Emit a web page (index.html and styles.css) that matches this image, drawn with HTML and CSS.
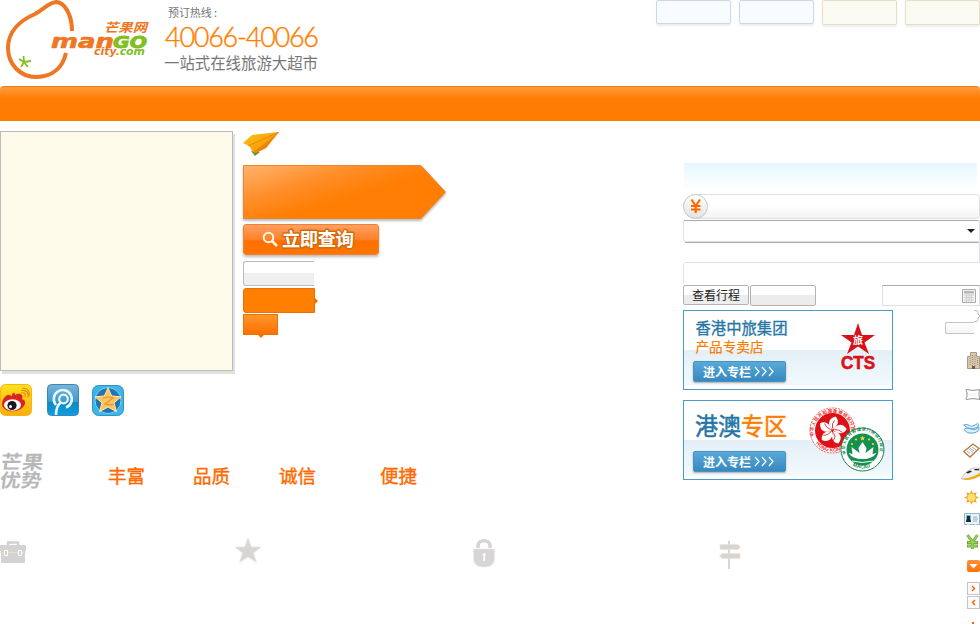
FILE: index.html
```html
<!DOCTYPE html>
<html lang="zh-CN">
<head>
<meta charset="utf-8">
<title>芒果网</title>
<link rel="stylesheet" href="styles.css">
</head>
<body>
<div class="page">
  <header class="header">
    <svg class="logo" width="160" height="86" viewBox="0 0 160 86">
      <g fill="none" stroke="#ef7622" stroke-width="4">
        <path d="M72 31C72 14 64 2 56 2C48 3 44 9 35 14C21 20 8 31 8 48C8 64 20 77 36 77C54 77 63 66 66 53"/>
      </g>
      <path d="M24 62L23.500 56M24 62l7-1M24 62l4 5M24 62l-3 5M24 62l-5-3" fill="none" stroke="#7fc31c" stroke-width="1.800"/>
      <text class="logo-cn" x="104" y="32" font-size="12.500" textLength="43" lengthAdjust="spacingAndGlyphs">芒果网</text>
      <text class="logo-en orange" x="51" y="48" font-size="20" stroke-width=".6" textLength="63" lengthAdjust="spacingAndGlyphs">man</text>
      <text class="logo-en green" x="113" y="48" font-size="15.500" stroke-width=".8" textLength="34" lengthAdjust="spacingAndGlyphs">GO</text>
      <text class="logo-en small" x="94" y="55" font-size="10" textLength="51" lengthAdjust="spacingAndGlyphs"><tspan class="orange">city</tspan><tspan class="green">.com</tspan></text>
    </svg>
    <svg class="hotline" width="170" height="86" viewBox="0 0 170 86">
      <text class="cn" x="8" y="17" font-size="11" fill="#777" textLength="49">预订热线 :</text>
      <text class="digits" x="5" y="47" font-size="27" textLength="154">40066-40066</text>
      <text class="cn" x="4" y="68.500" font-size="16" fill="#777" textLength="154" lengthAdjust="spacingAndGlyphs">一站式在线旅游大超市</text>
    </svg>
    <div class="tabs">
      <span class="tab blue"></span><span class="tab blue"></span><span class="tab cream"></span><span class="tab cream"></span>
    </div>
  </header>
  <nav class="nav"></nav>
  <main class="main">
    <section class="left">
      <div class="top">
        <div class="panel"></div>
        <div class="stack">
          <svg class="plane" width="38" height="26" viewBox="0 0 38 26">
            <defs><linearGradient id="pl" x1="0" y1="0" x2="1" y2="1"><stop offset="0" stop-color="#ffc51c"/><stop offset=".55" stop-color="#f9a30c"/><stop offset="1" stop-color="#e46b00"/></linearGradient></defs>
            <path d="M8 20l4 5 5-4z" fill="#5f9a2c"/>
            <path d="M0 12L9 4 36 1 23 17 13 22 10 21 6 15z" fill="url(#pl)"/>
            <path d="M36 1L5 15" stroke="#d98200" stroke-width=".7" fill="none"/>
            <path d="M36 1L11 21 13 22 23 17z" fill="#e97500" opacity=".6"/>
          </svg>
          <svg class="arrow" width="206" height="59" viewBox="0 0 206 59">
            <defs><linearGradient id="ar" gradientUnits="userSpaceOnUse" x1="25" y1="-12" x2="45" y2="52"><stop offset="0" stop-color="#ffb878"/><stop offset=".6" stop-color="#ff8d28"/><stop offset="1" stop-color="#ff7d02"/></linearGradient></defs>
            <path d="M.5.5H178L202.500 27 178 53.500H.5z" fill="url(#ar)" stroke="#f08428"/>
          </svg>
          <button class="search">
            <svg width="17" height="17" viewBox="0 0 17 17" fill="none" stroke="#fff7e6" stroke-width="2"><circle cx="6.500" cy="6.500" r="4.800"/><path d="M10 10l5 5" stroke-width="2.600"/></svg>
            <svg width="76" height="26" viewBox="0 0 76 26"><text class="search-text" x="1" y="19" font-size="18.500" textLength="72">立即查询</text></svg>
          </button>
          <div class="tab-off"></div>
          <div class="tab-on"></div>
          <div class="tab-small"></div>
        </div>
      </div>
      <div class="social">
        <svg width="32" height="32" viewBox="0 0 32 32">
          <defs><linearGradient id="wb" x2="0" y2="1"><stop stop-color="#ffe11c"/><stop offset="1" stop-color="#f8ae0a"/></linearGradient></defs>
          <rect x=".5" y=".5" width="31" height="31" rx="5" fill="url(#wb)" stroke="#f4b51b"/>
          <path d="M2 20C2 15 7 10 9 11L12 12C12 8 15 8 15 11C20 8 24 11 22 15C27 17 25 21 23 23C17 30 2 28 2 20z" fill="#dd2222"/>
          <ellipse cx="12.500" cy="21" rx="8.500" ry="5.800" fill="#fff"/><circle cx="12" cy="21.500" r="4.600" fill="#191919"/><circle cx="10.500" cy="22.500" r="1.500" fill="#fff"/>
          <path d="M21 9c4-1 5 1 4 4M21 6.500c6-1 8 3 7 7M22 4c6 0 8 4 7 8" fill="none" stroke="#e58a19" stroke-width="1.200"/>
        </svg>
        <svg width="32" height="32" viewBox="0 0 32 32">
          <defs><linearGradient id="tx" x2="0" y2="1"><stop stop-color="#7bb5d8"/><stop offset=".55" stop-color="#3c9bcf"/><stop offset=".56" stop-color="#0788c6"/><stop offset="1" stop-color="#10a0dd"/></linearGradient></defs>
          <rect x=".5" y=".5" width="31" height="31" rx="4" fill="url(#tx)" stroke="#3b85b8"/>
          <path d="M9 21A9 9 0 1 1 19 23.500M9 31C9 25 10.500 21 14 18" fill="none" stroke="#e7f6fc" stroke-width="2.600"/>
          <circle cx="16.500" cy="15" r="4.300" fill="none" stroke="#e7f6fc" stroke-width="2.200"/>
        </svg>
        <svg width="32" height="32" viewBox="0 0 32 32">
          <rect x=".5" y="1.500" width="31" height="30" rx="6" fill="#3db4ea" stroke="#2d94cf"/>
          <circle cx="16" cy="16.500" r="13" fill="#2375ad" stroke="#83d3f5"/>
          <path d="M16 4l3.700 8 9.300.8-7 6 2.500 8.900-8.500-4.700-8.500 4.700 2.500-8.900-7-6 9.300-.8z" fill="#ffc45c" stroke="#ffe8b4"/>
          <path d="M11 14c4-1 8-1 10 0l-8 6c3 1 7 1 9 0" fill="none" stroke="#e39a42" stroke-width="1.400"/>
        </svg>
      </div>
      <div class="advantages">
        <svg class="adv-title" width="46" height="40" viewBox="0 0 46 40"><g transform="skewX(-8)"><text class="cnb" x="2" y="16.500" font-size="19" textLength="43" lengthAdjust="spacingAndGlyphs">芒果</text><text class="cnb" x="4" y="35.500" font-size="18.500" textLength="42" lengthAdjust="spacingAndGlyphs">优势</text></g></svg>
        <span class="adv a1">丰富</span><span class="adv a2">品质</span><span class="adv a3">诚信</span><span class="adv a4">便捷</span>
      </div>
      <div class="features">
        <svg width="26" height="30" viewBox="0 0 26 30">
          <path d="M8 7V4.500h10V7" fill="none" stroke="#d3d0ce" stroke-width="2.400"/><path d="M0 7h26v6h-1v12H1V13H0z" fill="#d3d3d3"/>
          <path d="M0 14.500h26" stroke="#f6d9c6"/>
          <path d="M4.500 12.500h3v5h-3zM18.500 12.500h3v5h-3z" fill="#d3d3d3" stroke="#fff"/>
        </svg>
        <svg class="f2" width="26" height="30" viewBox="0 0 26 30"><path d="M13 0l3.300 9H26l-7.500 6 3 9.500L13 19 4.500 24.500l3-9.500L0 9h9.700z" fill="#d6d6d6" stroke="#f6dfcf" stroke-width=".7"/></svg>
        <svg class="f3" width="22" height="30" viewBox="0 0 22 30"><path d="M5 10V7.500C5 1 17 1 17 7.500V10" fill="none" stroke="#d6d4d2" stroke-width="3.500"/><path d="M.5 11h21v10Q21 29 11 29T.5 21z" fill="#d6d6d6" stroke="#f6e3d7" stroke-width=".6"/><path d="M11 15a1.600 1.600 0 0 1 1 3l.2 5h-2l.2-5a1.600 1.600 0 0 1 .6-3z" fill="#fff"/></svg>
        <svg class="f4" width="22" height="31" viewBox="0 0 22 31" fill="#d6d6d6"><path d="M9 3h2v28H9z"/><path d="M1 6.500h18l2.500 2.500-2.500 2.500H1zM3 15.500h18v5H3L.5 18z" stroke="#f5dfd1" stroke-width=".6"/></svg>
      </div>
    </section>
    <section class="right">
      <div class="sky"></div>
      <div class="fee"><svg width="25" height="25" viewBox="0 0 25 25"><defs><linearGradient id="cy" x2="0" y2="1"><stop stop-color="#fff"/><stop offset="1" stop-color="#e3e3e3"/></linearGradient></defs><circle cx="12.500" cy="12.500" r="12" fill="url(#cy)" stroke="#c8c8c8"/><path d="M8.500 5.500l4.200 6.500L17 5.500M12.700 12v7M8 12h9.500M8 15.500h9.500" fill="none" stroke="#ff6a00" stroke-width="2.200"/></svg></div>
      <div class="select"><i class="caret"></i></div>
      <div class="field-end"></div>
      <div class="field-start"></div>
      <div class="controls">
        <span class="btn">查看行程</span><span class="btn blank"></span>
        <span class="date"><svg width="14" height="14" viewBox="0 0 14 14"><path d="M.5.5h13v13H.5z" fill="#f4f4f4" stroke="#aaa"/><path d="M2 2h10v2.500H2z" fill="#b6b6b6"/><path d="M2 6h10M2 8.500h10M2 11h10M4.500 5v8M7 5v8M9.500 5v8" stroke="#c6c6c6" stroke-width=".8"/></svg></span>
      </div>
      <div class="lower">
        <div class="ads">
          <article class="ad">
            <div class="copy">
              <svg width="110" height="44" viewBox="0 0 110 44"><text class="cn" x="1.500" y="16.500" font-size="16" fill="#2575a5" stroke="#2575a5" stroke-width=".3" textLength="92" lengthAdjust="spacingAndGlyphs">香港中旅集团</text><text class="cn" x="1.500" y="34.500" font-size="14" fill="#ff7c00" stroke="#ff7c00" stroke-width=".2" textLength="68" lengthAdjust="spacingAndGlyphs">产品专卖店</text></svg>
              <span class="enter">进入专栏<svg width="21" height="12" viewBox="0 0 21 12" fill="none" stroke="#fff" stroke-width="1.200"><path d="M1 1l4 4.500L1 10M8 1l4 4.500L8 10M15 1l4 4.500L15 10"/></svg></span>
            </div>
            <svg class="cts" width="36" height="48" viewBox="0 0 36 48"><path d="M18 0l4 12h13l-10.500 7.500L29 31l-11-7.500L7 31l4.500-11.500L1 12h13z" fill="#db111a"/><text x="13" y="20.500" class="cnb" font-size="10" fill="#fff">旅</text><text class="cts-text" x="1" y="46" font-size="17.500" textLength="34" lengthAdjust="spacingAndGlyphs">CTS</text></svg>
          </article>
          <article class="ad">
            <div class="copy">
              <svg width="110" height="44" viewBox="0 0 110 44"><text class="cn" x="1" y="28" font-size="24" stroke-width=".5" textLength="92" lengthAdjust="spacingAndGlyphs"><tspan fill="#2575a5" stroke="#2575a5">港澳</tspan><tspan fill="#ff7c00" stroke="#ff7c00">专区</tspan></text></svg>
              <span class="enter">进入专栏<svg width="21" height="12" viewBox="0 0 21 12" fill="none" stroke="#fff" stroke-width="1.200"><path d="M1 1l4 4.500L1 10M8 1l4 4.500L8 10M15 1l4 4.500L15 10"/></svg></span>
            </div>
            <svg class="emblems" width="76" height="66" viewBox="0 0 76 66">
              <defs><path id="rim1" d="M5 29A19 19 0 1 1 42 29"/><path id="rim2" d="M37 47A17.500 17.500 0 1 1 70 47"/><path id="rim3" d="M34 42A19.500 19.500 0 0 0 73 42"/><path id="rim4" d="M3 27A21 21 0 0 0 40 37"/></defs>
              <circle cx="23.500" cy="23.500" r="22.500" fill="#fff" stroke="#e33" stroke-width=".8" stroke-dasharray="2 1"/><circle cx="23.500" cy="23.500" r="17.500" fill="#dd0f17"/>
              <text class="cnb rim-red" font-size="4.500"><textPath href="#rim1" textLength="68">中华人民共和国香港特别行政区</textPath></text>
              <text class="rim-en rim-red" font-size="5"><textPath href="#rim4" startOffset="10">HONG KONG</textPath></text>
              <g fill="#fff" transform="translate(23.500 23.500)"><path d="M0-1C-5-5-5-12 3-14C7-10 6-5 0-1z"/><path d="M0-1C-5-5-5-12 3-14C7-10 6-5 0-1z" transform="rotate(72)"/><path d="M0-1C-5-5-5-12 3-14C7-10 6-5 0-1z" transform="rotate(144)"/><path d="M0-1C-5-5-5-12 3-14C7-10 6-5 0-1z" transform="rotate(216)"/><path d="M0-1C-5-5-5-12 3-14C7-10 6-5 0-1z" transform="rotate(288)"/></g>
              <g fill="none" stroke="#dd0f17" stroke-width=".8" transform="translate(23.500 23.500)"><path d="M0-2Q-1-7 2-10M2-1Q7-1 10 2M1 2Q4 6 1 10M-1 1Q-5 5-9 5M-2-1Q-7-3-8-7"/></g>
              <circle cx="53.500" cy="42.500" r="21.500" fill="#fff" stroke="#15854a"/><circle cx="53.500" cy="42.500" r="16" fill="#149052"/>
              <text class="cnb rim-green" font-size="4"><textPath href="#rim2" textLength="64">中华人民共和国澳门特别行政区</textPath></text>
              <text class="rim-en rim-green" font-size="5"><textPath href="#rim3" startOffset="20">MACAU</textPath></text>
              <path d="M53.500 35l4 6-1 5 8-6-1 7 4-1q-4 6-14 6t-14-6l4 1-1-7 8 6-1-5z" fill="#fff"/><path d="M43 54q10 3 21 0" stroke="#fff" fill="none"/>
              <path d="M53.500 28.500l.8 2h2l-1.600 1.300.6 2-1.800-1.200-1.800 1.200.6-2-1.600-1.300h2z" fill="#f5dc27"/><g fill="#f5dc27"><circle cx="47" cy="32.500" r="1.100"/><circle cx="60" cy="32.500" r="1.100"/><circle cx="43" cy="37" r="1.100"/><circle cx="64" cy="37" r="1.100"/></g>
            </svg>
          </article>
        </div>
        <div class="edge">
          <svg width="6" height="12" viewBox="0 0 6 12"><path d="M0 .5h2q2 0 2 2v1.500l2 2-2 2v1.500q0 2-2 2H0" fill="#fff" stroke="#bbb"/></svg>
          <div class="stub"></div>
          <svg class="e-building" width="13" height="17" viewBox="0 0 13 17"><path d="M3.500.5h6v4h3v12H.5v-12h3z" fill="#d8c9b0" stroke="#aa9984"/><path d="M3 6v8M5.500 3v11M8 3v11M10.500 6v8" stroke="#98866f" stroke-dasharray="1 1"/><path d="M5 14h3v3H5z" fill="#735c43"/></svg>
          <svg class="e-pillow" width="15" height="13" viewBox="0 0 15 13"><path d="M1 1.500q7 2 14 0M1 11.500q7-2 14 0M1 1.500Q.5 3 2 4v5Q.5 10 1 11.500M14.500 2q-1 4 0 9" fill="#eee" stroke="#999"/><path d="M3 5v3l9 .500V5z" fill="#f6f6f6"/></svg>
          <svg class="e-ribbon" width="17" height="12" viewBox="0 0 17 12" fill="#d8effc" stroke="#5ba5d2"><path d="M.7 3q3-1.500 5.500.5t8.500-2q2 1 0 3.500l-5 2Q4 7 .7 3zM1 7.500Q3 5 8 7q5 2 8-2 1 5-6 6Q4 12 1 7.500z"/></svg>
          <svg class="e-ticket" width="17" height="15" viewBox="0 0 17 15"><path d="M.8 8.500L10 1l6 4.500-9 8.500z" fill="#fff" stroke="#b5793c" stroke-width="1.300"/><path d="M4 8l3 2.500M6 6.500l4 3M9 4l4 3M7 5l4 3" stroke="#aaa"/></svg>
          <svg class="e-train" width="19" height="14" viewBox="0 0 19 14"><path d="M0 12Q5 3 12 1h7v7Q10 13 0 12z" fill="#eee" stroke="#aaa" stroke-width=".6"/><path d="M1 12Q11 11 19 6v3Q8 15 1 12z" fill="#edab16"/><path d="M5 5.500l4-2 2 1-4 2zM13 2h5v1.200h-4z" fill="#222"/></svg>
          <svg class="e-sun" width="15" height="15" viewBox="0 0 15 15"><path d="M7.500 0L9 3.500 12.800 2.200 11.500 6 15 7.500 11.500 9 12.800 12.800 9 11.500 7.500 15 6 11.500 2.200 12.800 3.500 9 0 7.500 3.500 6 2.200 2.200 6 3.500z" fill="#f2a52e"/><circle cx="7.500" cy="7.500" r="4.300" fill="#ffdf70" stroke="#f4b545"/></svg>
          <svg class="e-card" width="16" height="13" viewBox="0 0 16 13"><path d="M.5.5h15v11H.5z" fill="#e8f4f8" stroke="#93b6c4"/><path d="M2 2h5v7H2z" fill="#78b7dc"/><path d="M3 3h3v3l1 2v1H2V8l1-2z" fill="#172b3a"/><path d="M9 4h4M9 6h5M9 8h4" stroke="#9ab"/><path d="M3 12h3M10 12h3" stroke="#fff"/></svg>
          <svg class="e-yen" width="13" height="16" viewBox="0 0 13 16"><path d="M1.500 1l5 7 5-7M6.500 7v8M1 8.500h11M1 12h11" fill="none" stroke="#6aa52f" stroke-width="3"/><path d="M1.500 1l5 7 5-7M6.500 7v8M2 8.500h9M2 12h9" fill="none" stroke="#9bd064" stroke-width="1.500"/></svg>
          <div class="drop"><svg width="9" height="5" viewBox="0 0 9 5"><path d="M.5 0h8l-4 4.500z" fill="#fff"/></svg></div>
          <div class="pager p1"><svg width="5" height="5" viewBox="0 0 5 5"><path d="M1 0l2.500 2.500L1 5" fill="none" stroke="#ff6000" stroke-width="1.400"/></svg></div>
          <div class="pager"><svg width="5" height="5" viewBox="0 0 5 5"><path d="M4 0L1.500 2.500 4 5" fill="none" stroke="#ff6000" stroke-width="1.400"/></svg></div>
          <i class="dot"></i>
        </div>
      </div>
    </section>
  </main>
</div>
</body>
</html>
```
FILE: styles.css
```css
* { box-sizing: border-box; }
body { margin: 0; background: #fff; font-family: "Liberation Sans", "Noto Sans CJK SC", sans-serif; }
svg { display: block; flex: none; overflow: visible; }
.page { width: 980px; height: 625px; overflow: hidden; }

.header { display: flex; height: 86px; }
.cn { font-family: "Noto Sans CJK SC", sans-serif; }
.cnb { font-family: "Noto Sans CJK SC", sans-serif; font-weight: 700; }
.logo-cn { font-family: "Noto Sans CJK SC", sans-serif; font-weight: 700; font-style: italic; fill: #ef7622; }
.logo-en { font-family: "DejaVu Sans", sans-serif; font-weight: 700; font-style: italic; }
.orange { fill: #ef7622; stroke: #ef7622; }
.green { fill: #80bf20; stroke: #80bf20; }
.small tspan { stroke: none; }
.digits { font-family: Lato, sans-serif; font-weight: 300; fill: #ff8000; stroke: #ff8000; stroke-width: .4px; }
.tabs { display: flex; gap: 8px; margin-left: auto; }
.tab { width: 75px; height: 24px; border: 1px solid #cad9e7; border-radius: 2px; box-shadow: 0 2px 2px #eee; }
.blue { background: #f9fcff; }
.cream { height: 25px; border-color: #e6dfc4; background: #fbfaf2; }

.nav { height: 35px; border-top: 1px solid #f87a08; border-radius: 4px 4px 0 0; background: linear-gradient(#ff9a3d, #ff7c02 12px); }
.main { display: flex; padding-top: 10px; }
.left { flex: none; width: 683px; }
.top { display: flex; height: 253px; gap: 10px; }
.panel { width: 233px; height: 240px; border: 1px solid #bdbdb7; background: #fdfae9; box-shadow: 2px 3px 0 #e0e0de; }
.stack { display: flex; flex-direction: column; align-items: flex-start; }
.arrow { margin-top: 8px; filter: drop-shadow(0 2px 1px #bbb); }
.search { display: flex; align-items: center; gap: 2px; width: 136px; height: 31px; padding: 0 0 0 18px; border: 1px solid #f0822d; border-radius: 3px; background: linear-gradient(#ffa064, #ff8125 50%, #ff7000 55%, #ff7500); box-shadow: 0 2px 3px #bbb; }
.search-text { font-family: "Noto Sans CJK SC", sans-serif; font-weight: 700; fill: #fff; stroke: #d66a0b; stroke-width: 3px; paint-order: stroke; stroke-linejoin: round; }
.tab-off { width: 71px; height: 25px; margin-top: 6px; border: 1px solid #bbb; border-right: 0; border-radius: 3px 0 0 3px; background: linear-gradient(#fff 50%, #efefef 50%); }
.tab-on, .tab-small { position: relative; border: 1px solid #e97206; background: #ff7f02; }
.tab-on { width: 72px; height: 25px; margin-top: 2px; border-radius: 3px 0 0 3px; }
.tab-on::after { content: ""; position: absolute; right: -4px; top: 9px; border: 3px solid transparent; border-right: 0; border-left-color: #e97206; }
.tab-small { width: 35px; height: 21px; margin-top: 1px; background: linear-gradient(#ff962d, #ff7000); }
.tab-small::after { content: ""; position: absolute; left: 14px; bottom: -4px; border: 3px solid transparent; border-bottom: 0; border-top-color: #f57200; }

.social { display: flex; gap: 13px; height: 32px; }
.social svg:first-child { margin-right: 2px; }
.advantages { display: flex; align-items: flex-start; margin-top: 36px; height: 86px; }
.adv-title { fill: #b8b8b8; }
.adv { width: 38px; margin-top: 12px; font: 18.500px/22px "Noto Sans CJK SC", sans-serif; color: #ff6a00; -webkit-text-stroke: .4px #ff6a00; white-space: nowrap; }
.a1 { margin-left: 62px; }
.a2 { margin-left: 47px; }
.a3 { margin-left: 48px; }
.a4 { margin-left: 63px; }
.features { display: flex; width: 741px; }
.f2 { margin-left: 209px; }
.f3 { margin-left: 212px; }
.f4 { margin-left: 224px; }

.right { flex: none; width: 297px; padding-top: 32px; }
.sky { height: 26px; margin: 0 3px 5px 1px; background: linear-gradient(#e5f8ff, #fff); }
.fee { height: 25px; border: 1px solid #ddd; border-radius: 13px 4px 4px 13px; background: linear-gradient(#fff 45%, #f3f3f3); }
.fee svg { margin: -1px; }
.select { display: flex; align-items: center; justify-content: flex-end; height: 22px; margin-top: 1px; padding-right: 4px; border: 1px solid #dfdfe7; border-top-color: #aaaab2; border-radius: 2px; }
.caret { border: 4px solid transparent; border-bottom: 0; border-top-color: #222; }
.field-end { height: 21px; margin-left: 2px; border: 1px solid #dfdfe7; border-top-color: #aaaab2; border-left: 0; border-radius: 0 2px 2px 0; }
.field-start { height: 21px; border-left: 1px solid #dfdfe7; border-radius: 2px 0 0 2px; }
.controls { display: flex; gap: 1px; height: 25px; margin-top: 1px; }
.btn { width: 66px; height: 20px; border: 1px solid #b3b3b3; border-radius: 2px; background: linear-gradient(#fff 50%, #ececec 50%); font: 12px/18px "Noto Sans CJK SC", sans-serif; color: #222; text-align: center; }
.blank { height: 21px; }
.date { display: flex; align-items: center; justify-content: flex-end; width: 98px; height: 21px; margin-left: auto; padding-right: 3px; border: 1px solid #dfdfe7; border-top-color: #aaaab2; }

.lower { display: flex; justify-content: space-between; }
.ads { display: flex; flex-direction: column; gap: 10px; width: 210px; }
.ad { display: flex; height: 80px; border: 1px solid #4b9bcb; background: linear-gradient(#fff 50%, #e3eff7 50%, #f2f9fd 95%, #fff 97%); }
.copy { width: 126px; padding: 6px 0 0 10px; }
.enter { display: flex; align-items: center; gap: 3px; width: 93px; height: 21px; margin-left: -1px; padding-left: 9px; border: 1px solid #4393c4; border-radius: 2px; background: linear-gradient(#58aad9, #3788bf); box-shadow: 0 1px 2px #aaa; color: #fff; font: 700 12px/18px "Noto Sans CJK SC", sans-serif; white-space: nowrap; }
.cts { margin: 12px 0 0 30px; }
.cts-text { font-family: "Liberation Sans", sans-serif; font-weight: 700; fill: #db111a; stroke: #db111a; stroke-width: .6px; }
.emblems { margin: 6px 0 0 -1px; }
.rim-red { fill: #e33; }
.rim-green { fill: #15854a; }
.rim-en { font-family: "Liberation Sans", sans-serif; font-weight: 700; }

.edge { display: flex; flex-direction: column; align-items: flex-end; width: 35px; }
.stub { width: 29px; height: 12px; margin-right: 6px; border: 1px solid #c5c5c5; border-right: 0; border-radius: 2px 0 0 2px; background: linear-gradient(#fff, #f4f4f4); }
.e-building { margin-top: 18px; }
.e-pillow { margin-top: 19px; }
.e-ribbon { margin-top: 21px; }
.e-ticket { margin-top: 9px; }
.e-train { margin-top: 9px; }
.e-sun { margin: 9px 1px 0 0; }
.e-card { margin-top: 8px; }
.e-yen { margin: 8px 1px 0 0; }
.drop { display: flex; align-items: center; justify-content: center; width: 13px; height: 12px; margin-top: 10px; border-radius: 2px; background: linear-gradient(#ff9140, #ff7200); }
.pager { display: flex; align-items: center; justify-content: center; width: 13px; height: 13px; margin-top: 1px; border: 1px solid #c4c4c4; background: #fafafa; }
.p1 { margin-top: 10px; }
.dot { width: 2px; height: 2px; margin: 13px 6px 0 0; background: #ff6000; }
```
